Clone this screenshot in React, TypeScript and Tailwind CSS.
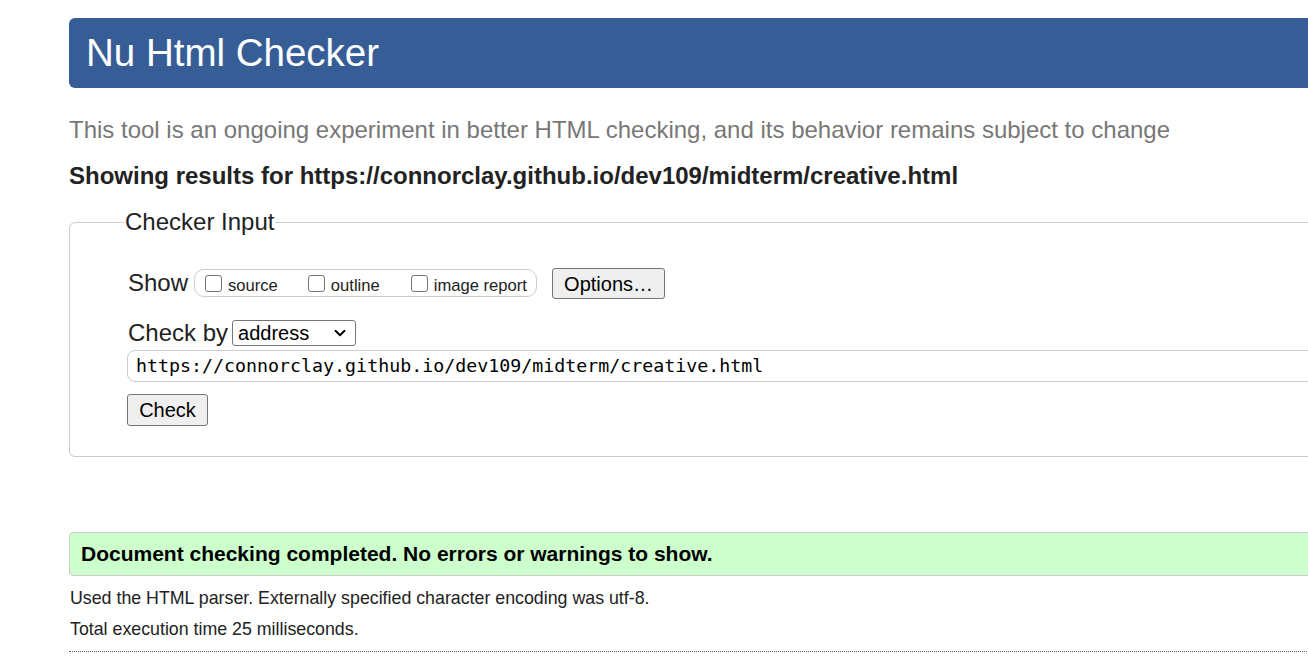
import { ChevronDown } from "lucide-react";

function Box({ label, className }: { label: string; className?: string }) {
  return (
    <label className={`flex items-center ${className ?? ""}`}>
      <span className="inline-block w-[17px] h-[17px] border border-[#767676] rounded-[3px] bg-white -mt-[6px] mr-[6px]" />
      <span className="text-[16.6px] text-[#222]">{label}</span>
    </label>
  );
}

export default function App() {
  return (
    <div className="w-[1308px] h-[671px] overflow-hidden bg-white font-['Liberation_Sans',Arial,sans-serif] text-[#222]">
      <div className="ml-[69px] w-[1360px] pt-[18px]">
        <h1 className="h-[70px] flex items-center pl-[17px] bg-[#365d95] text-white text-[38.5px] rounded-[6px]">
          Nu Html Checker
        </h1>

        <p className="mt-[28px] text-[24px] leading-[28px] text-[#777]">
          This tool is an ongoing experiment in better HTML checking, and its behavior remains subject to change
        </p>

        <h2 className="mt-[18px] text-[24px] leading-[28px] font-bold">
          Showing results for https://connorclay.github.io/dev109/midterm/creative.html
        </h2>

        <fieldset className="mt-[18px] border border-[#ccc] rounded-[6px] pl-[58px] pb-[30px] w-[1300px]">
          <legend className="-ml-[4px] px-px text-[24px] leading-[28px]">Checker Input</legend>

          <div className="mt-[31px] flex items-center h-[32px]">
            <span className="text-[24px] mr-[6px]">Show</span>
            <div className="flex items-center h-[28px] w-[343px] border border-[#ccc] rounded-[10px] pl-[10px]">
              <Box label="source" className="mt-[6px]" />
              <Box label="outline" className="ml-[30px] mt-[6px]" />
              <Box label="image report" className="ml-[31px] mt-[6px]" />
            </div>
            <button className="ml-[15px] h-[31px] w-[113px] bg-[#efefef] border border-[#767676] rounded-[3px] text-[20px] text-black">
              Options…
            </button>
          </div>

          <div className="mt-[21px] flex items-center h-[26px]">
            <span className="text-[24px] mr-[4px]">Check by</span>
            <div className="flex items-center justify-between h-[26px] w-[124px] border border-[#767676] rounded-[3px] pl-[5px] pr-[6px] text-[20px] text-black">
              <span>address</span>
              <ChevronDown size={18} strokeWidth={2.5} />
            </div>
          </div>

          <div className="mt-[4px] -ml-[1px] h-[32px] flex items-center border border-[#ccc] rounded-[8px] pl-[8px] font-['DejaVu_Sans_Mono',monospace] text-[18.3px] text-black">
            https://connorclay.github.io/dev109/midterm/creative.html
          </div>

          <button className="mt-[12px] -ml-[1px] h-[32px] w-[81px] bg-[#efefef] border border-[#767676] rounded-[3px] text-[20px] text-black">
            Check
          </button>
        </fieldset>

        <div className="mt-[75px] h-[44px] flex items-center pl-[11px] bg-[#ccffcc] border border-[#ccc] rounded-[4px] text-[21px] font-bold text-black">
          Document checking completed. No errors or warnings to show.
        </div>

        <p className="mt-[11px] text-[17.8px] leading-[22px] pl-px">
          Used the HTML parser. Externally specified character encoding was utf-8.
        </p>
        <p className="mt-[9px] text-[17.8px] leading-[22px] pl-px">Total execution time 25 milliseconds.</p>
        <div className="mt-[11px] border-t border-dotted border-[#666]" />
      </div>
    </div>
  );
}
